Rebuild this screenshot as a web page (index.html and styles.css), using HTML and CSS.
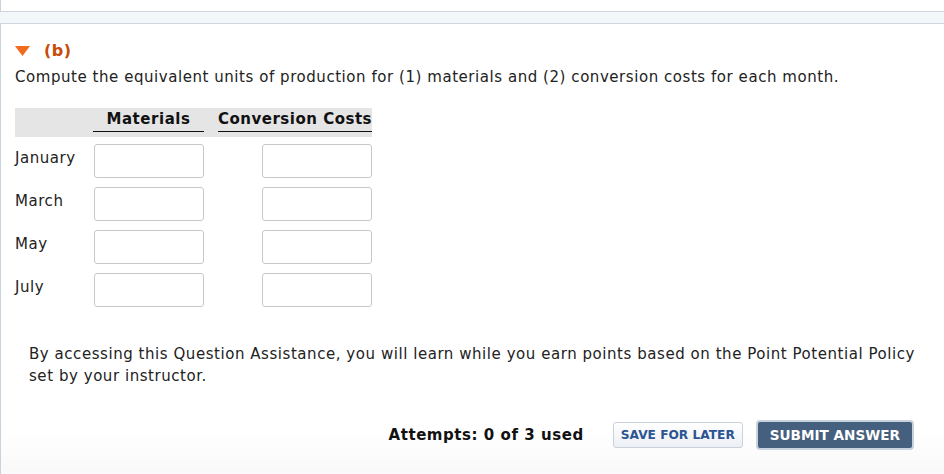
FILE: index.html
```html
<!DOCTYPE html>
<html>
<head>
<meta charset="utf-8">
<link rel="stylesheet" href="styles.css">
</head>
<body>
<div class="top"></div>
<div class="band"></div>
<div class="panel">
  <div class="heading">
    <svg class="tri" width="15" height="10" viewBox="0 0 15 10"><polygon points="0,0 15,0 7.5,10" fill="#f26b1d"/></svg>
    <span class="part">(b)</span>
  </div>
  <p class="question">Compute the equivalent units of production for (1) materials and (2) conversion costs for each month.</p>
  <div class="grid">
    <div class="hdr">
      <div class="hcell h1">Materials</div>
      <div class="hcell h2">Conversion Costs</div>
    </div>
    <div class="row"><div class="label">January</div><input class="in c1" type="text"><input class="in c2" type="text"></div>
    <div class="row"><div class="label">March</div><input class="in c1" type="text"><input class="in c2" type="text"></div>
    <div class="row"><div class="label">May</div><input class="in c1" type="text"><input class="in c2" type="text"></div>
    <div class="row"><div class="label">July</div><input class="in c1" type="text"><input class="in c2" type="text"></div>
  </div>
  <p class="assist">By accessing this Question Assistance, you will learn while you earn points based on the Point Potential Policy set by your instructor.</p>
  <div class="actions">
    <span class="attempts">Attempts: 0 of 3 used</span>
    <button class="btn save">SAVE FOR LATER</button>
    <button class="btn submit">SUBMIT ANSWER</button>
  </div>
</div>
</body>
</html>
```
FILE: styles.css
```css
html, body {
  margin: 0;
  padding: 0;
  background: #fff;
}
body {
  font-family: "DejaVu Sans", Verdana, sans-serif;
  font-size: 15px;
  letter-spacing: 0.55px;
  color: #222;
  width: 944px;
  height: 474px;
  overflow: hidden;
}
.top {
  height: 11px;
  border-left: 1px solid #c9d3dd;
  border-bottom: 1px solid #cfd5dc;
}
.band {
  height: 11px;
  background: #f4f7fa;
  border-bottom: 1px solid #cfd5dc;
}
.panel {
  border-left: 1px solid #c9d3dd;
  padding: 14px 0 0 14px;
  height: 450px;
  box-sizing: border-box;
  background: linear-gradient(to bottom, #fff 0, #fff 405px, #f9f9f9 450px);
}
.heading {
  display: flex;
  align-items: center;
  gap: 14px;
  height: 22px;
  margin-top: 1px;
}
.tri {
  display: block;
  margin-top: 1px;
}
.part {
  color: #c84b0a;
  font-weight: bold;
  font-size: 16px;
}
.question {
  margin: 5px 0 0 0;
  line-height: 22px;
}
.grid {
  margin-top: 20px;
  width: 357px;
}
.hdr {
  display: flex;
  height: 29px;
  background: #e5e5e5;
  padding-left: 78px;
  box-sizing: border-box;
  align-items: flex-start;
}
.hcell {
  font-weight: bold;
  text-align: center;
  border-bottom: 1px solid #111;
  height: 23px;
  line-height: 22px;
  color: #111;
}
.h1 { width: 111px; }
.h2 { width: 154px; margin-left: 14px; text-align: right; letter-spacing: 0.5px; }
.row {
  display: flex;
  align-items: flex-start;
  margin-top: 7px;
  height: 36px;
}
.row + .row { margin-top: 7px; }
.label {
  width: 79px;
  padding-top: 5px;
  line-height: 18px;
}
.in {
  width: 110px;
  height: 34px;
  box-sizing: border-box;
  border: 1px solid #c8c8c8;
  border-radius: 3px;
  background: #fff;
  margin: 0;
  padding: 0;
}
.c2 { margin-left: 58px; }
.assist {
  margin: 34px 0 0 14px;
  width: 890px;
  line-height: 22px;
}
.actions {
  display: flex;
  justify-content: flex-end;
  align-items: center;
  padding-right: 30px;
  margin-top: 33px;
}
.attempts {
  font-weight: bold;
  color: #111;
  margin-right: 29px;
}
.btn {
  font-family: "DejaVu Sans", Verdana, sans-serif;
  font-weight: bold;
  letter-spacing: 0;
  cursor: pointer;
}
.save {
  font-size: 12.2px;
  height: 26px;
  padding: 0 7px;
  color: #2b5493;
  border: 1px solid #c9d1db;
  border-radius: 3px;
  background: linear-gradient(to bottom, #fff, #eceff4);
  margin-right: 13px;
}
.submit {
  font-size: 13.6px;
  height: 30px;
  padding: 0 12px;
  color: #fff;
  background: #45607e;
  border: 2px solid #c8d3e0;
  border-radius: 4px;
}
```
